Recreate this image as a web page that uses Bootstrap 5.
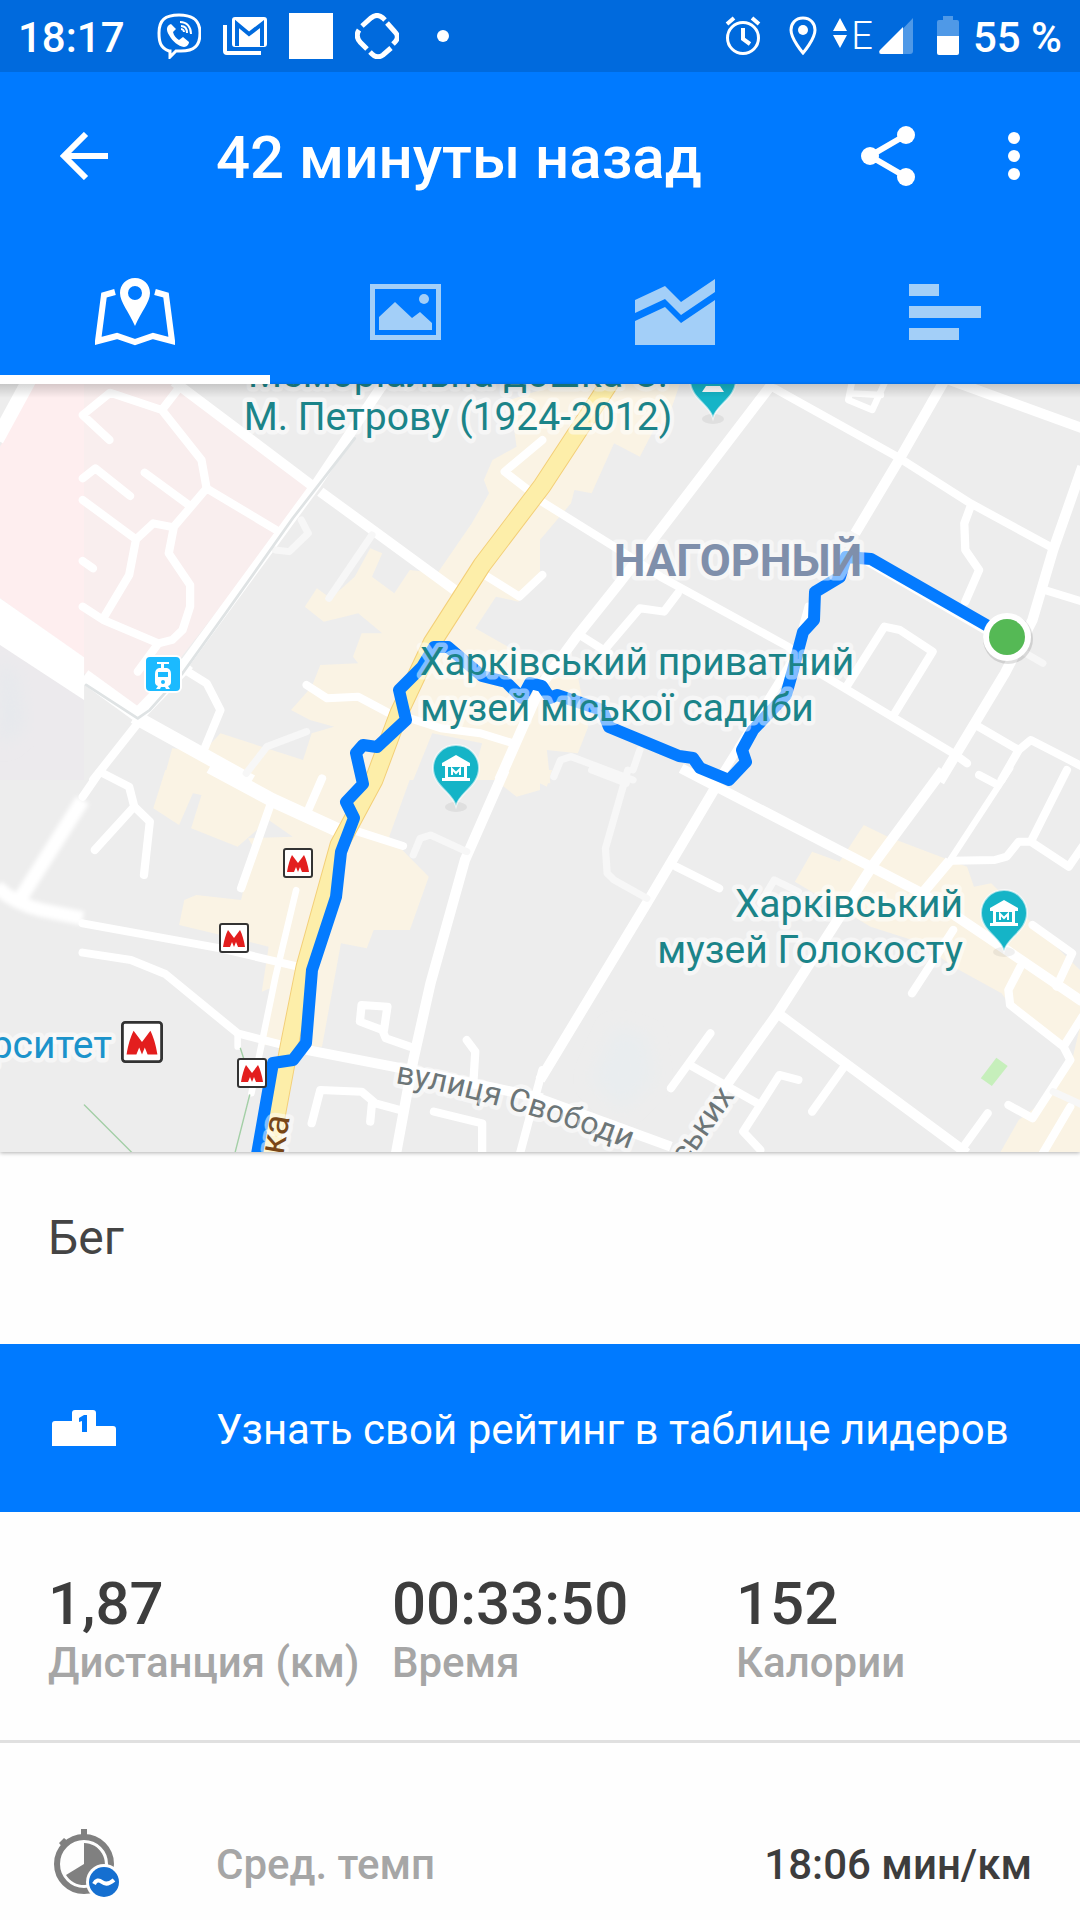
<!DOCTYPE html>
<html lang="ru">
<head>
<meta charset="utf-8">
<meta name="viewport" content="width=device-width, initial-scale=1">
<title>42 минуты назад</title>
<link href="https://cdn.jsdelivr.net/npm/bootstrap@5.3.0/dist/css/bootstrap.min.css" rel="stylesheet">
<script src="https://cdn.jsdelivr.net/npm/bootstrap@5.3.0/dist/js/bootstrap.bundle.min.js"></script>
<style>
  body { font-family: Roboto, "Noto Sans", sans-serif; font-size: 42px; line-height: 54px; color: #3d3d3d; background: #fefefe; overflow-x: hidden; }
  svg { display: block; flex: none; }
  .statusbar { height: 72px; padding: 0 18px; background: #006add; font-weight: 500; }
  .bar-text { padding-top: 4px; }
  .notif { gap: 22px; margin-left: 32px; }
  .net { gap: 6px; margin: 0 24px 0 16px; }
  .pin-icon { margin-left: 20px; }
  .battery-text { margin-left: 14px; }
  .net-type { font-size: 38px; font-weight: 300; }
  .brand-bg { background: #007aff; }
  .appbar { height: 168px; padding: 0 30px 0 48px; }
  .icon-btn { width: 72px; height: 72px; padding: 0; border: 0; background: none; color: #fff; display: flex; align-items: center; justify-content: center; }
  .screen-title { font-size: 60px; line-height: 72px; font-weight: 500; margin: 0 0 0 96px; }
  .actions { gap: 54px; }
  .tabs-row .nav-link { height: 144px; padding: 0; border-bottom: 9px solid transparent; display: flex; align-items: center; justify-content: center; color: #a3cff8; border-radius: 0; }
  .tabs-row .nav-link.active { color: #fff; border-bottom-color: #fff; }
  .tabs-row svg { margin-top: 9px; }
  .map-view { box-shadow: 0 1px 4px rgba(0,0,0,.3); background: #ededed; }
  .map-view svg { width: 100%; height: auto; }
  .activity { font-size: 48px; line-height: 72px; padding: 50px 48px 70px; color: #444; }
  .leader-link { height: 168px; padding: 0 48px; }
  .lead-icon { width: 72px; margin-right: 96px; }
  .stats { padding: 60px 0 50px 48px; border-bottom: 3px solid #e0e0e0; }
  .stat-value { font-size: 60px; line-height: 64px; font-weight: 500; }
  .stat-label { color: #a6a6a6; font-weight: 500; white-space: nowrap; }
  .detail { padding: 86px 48px 19px; font-weight: 500; }
  .detail svg { margin-left: 6px; }

  .road { fill: none; stroke: #fff; stroke-width: 24; stroke-linecap: round; stroke-linejoin: round; }
  .road-l { stroke-width: 30; stroke-linecap: butt; }
  .road-xl { stroke-width: 42; stroke-linecap: butt; }
  .road-s { stroke-width: 19; }
  .lane { stroke: #f7f7f7; stroke-width: 21; }
  .rail { stroke: #dfe3e4; stroke-width: 8; }
  .zone { fill: #faf3e4; }
  .place { font-size: 39px; fill: #1b8489; }
  .street { font-size: 32px; fill: #6d7678; }
  .halo { paint-order: stroke; stroke: #fff; stroke-opacity: .5; stroke-width: 9px; stroke-linejoin: round; }
</style>
</head>
<body>

<div class="statusbar d-flex align-items-center justify-content-between text-white">
  <div class="d-flex align-items-center">
    <span class="bar-text">18:17</span>
    <div class="notif d-flex align-items-center">
      <svg width="44" height="46" viewBox="0 0 44 46" fill="none" stroke="#fff" stroke-width="3"><path d="M12 38C3 35 2 28 2 20 2 7 8 2 22 2S43 7 43 20 37 38 24 38l-5 0-6 6v-6z"/><path d="M14 11c-5 2-5 6-2 11 4 7 9 11 15 12 3 0 5-3 5-5l-6-5-4 3c-3-2-5-4-6-8l3-3z" fill="#fff" stroke="none"/><path d="M23 9c7 0 11 5 11 12M24 13c4 0 6 3 6 7M24 16c2 0 3 2 3 3" stroke-width="2"/></svg>
      <svg width="44" height="46" viewBox="0 0 44 46"><path fill="#fff" d="M12 4h29q3 0 3 3v24q0 3-3 3H12q-3 0-3-3V7q0-3 3-3zM0 12h4v26h34v4H4q-4 0-4-4z"/><path d="M14 33V11l12 10 13-10v22" fill="none" stroke="#006add" stroke-width="4"/></svg>
      <svg width="44" height="46"><path fill="#fff" d="M0 0h44v46H0z"/></svg>
      <svg width="44" height="46" viewBox="0 0 44 46" fill="none" stroke="#fff" stroke-width="5"><path d="M7 13l9-8q6-5 12 0l2 2M32 10l8 9q5 5 0 10l-2 2M36 35l-8 7q-6 4-11-1l-2-2M12 36l-7-7q-5-6-1-12"/></svg>
      <svg width="44" height="46"><circle cx="22" cy="23" r="6" fill="#fff"/></svg>
    </div>
  </div>
  <div class="d-flex align-items-center">
    <svg width="36" height="40" viewBox="0 0 36 40" fill="none" stroke="#fff" stroke-width="3"><circle cx="18" cy="22" r="15.500"/><path d="M18 12v11l7 5M2 8l7-6M34 8l-7-6" stroke-width="4"/></svg>
    <svg class="pin-icon" width="36" height="40" viewBox="0 0 36 40"><path d="M22 2c-8 0-12 6-12 12 0 9 12 23 12 23s12-14 12-23c0-6-4-12-12-12z" fill="none" stroke="#fff" stroke-width="3"/><circle cx="22" cy="14" r="5" fill="#fff"/></svg>
    <div class="net d-flex align-items-center">
      <div class="d-flex align-items-center gap-1"><svg width="14" height="40" viewBox="0 0 14 40" fill="#fff"><path d="M0 15L7 2l7 13zM0 19h14L7 32z"/></svg><span class="net-type">E</span></div>
      <svg width="34" height="36" viewBox="0 0 34 36"><path d="M0 36L34 0v33q0 3-3 3z" fill="#4f99e7"/><path d="M2 36q-3-1-1-4L24 9v27z" fill="#fff"/></svg>
    </div>
    <svg width="22" height="40" viewBox="0 0 22 40"><path d="M6 0h10v4h4q2 0 2 2v16H0V6q0-2 2-2h4z" fill="#4f99e7"/><path d="M0 20h22v17q0 2-2 2H2q-2 0-2-2z" fill="#fff"/></svg>
    <span class="bar-text battery-text">55 %</span>
  </div>
</div>

<header class="brand-bg text-white">
  <div class="appbar d-flex align-items-center">
    <button class="icon-btn" type="button" aria-label="Назад"><svg width="48" height="48" viewBox="0 0 48 48" fill="none" stroke="currentColor" stroke-width="6"><path d="M26 2L4 24l22 22M4 24h44"/></svg></button>
    <h1 class="screen-title bar-text flex-grow-1">42 минуты назад</h1>
    <div class="actions d-flex">
      <button class="icon-btn" type="button" aria-label="Поделиться"><svg width="54" height="60" viewBox="0 0 54 60" fill="currentColor"><path d="M45 9L9 30l36 21" fill="none" stroke="currentColor" stroke-width="6"/><circle cx="45" cy="9" r="9"/><circle cx="9" cy="30" r="9"/><circle cx="45" cy="51" r="9"/></svg></button>
      <button class="icon-btn" type="button" aria-label="Ещё"><svg width="12" height="48" viewBox="0 0 12 48" fill="currentColor"><circle cx="6" cy="6" r="6"/><circle cx="6" cy="24" r="6"/><circle cx="6" cy="42" r="6"/></svg></button>
    </div>
  </div>
  <nav class="tabs-row nav nav-justified">
    <a class="nav-item nav-link active" href="#map" aria-label="Карта"><svg width="80" height="68" viewBox="0 0 80 68"><path d="M20 14L9 17 3 63l19-5 18 6 18-6 19 5-6-46-11-3" fill="none" stroke="currentColor" stroke-width="6"/><path fill="currentColor" fill-rule="evenodd" d="M40 0C31 0 25 7 25 15c0 9 9 19 15 33 6-14 15-24 15-33C55 7 49 0 40 0zm0 8a7 7 0 1 1 0 14 7 7 0 0 1 0-14z"/></svg></a>
    <a class="nav-item nav-link" href="#photos" aria-label="Фото"><svg width="71" height="56" viewBox="0 0 71 56"><path d="M2.500 2.500h66v51h-66z" fill="none" stroke="currentColor" stroke-width="5"/><path d="M9 46V33l16-15 17 16 8-6 12 11v7z" fill="currentColor"/><circle cx="54" cy="15" r="5" fill="currentColor"/></svg></a>
    <a class="nav-item nav-link" href="#charts" aria-label="Графики"><svg width="80" height="66" viewBox="0 0 80 66" fill="currentColor"><path d="M0 21L30 7l16 16L80 0v13L46 36 30 20 0 34zM0 42l30-14 16 16 34-23v45H0z"/></svg></a>
    <a class="nav-item nav-link" href="#splits" aria-label="Отрезки"><svg width="72" height="56" viewBox="0 0 72 56" fill="currentColor"><path d="M0 0h30v12H0zM0 22h72v12H0zM0 44h50v12H0z"/></svg></a>
  </nav>
</header>

<main>
<section class="map-view" id="map">
<svg viewBox="0 384 1080 768" role="img" aria-label="Карта маршрута">
  <defs>
    <filter id="soft" x="-20%" y="-20%" width="140%" height="140%"><feGaussianBlur stdDeviation="6"/></filter>
    <filter id="haze" x="-40%" y="-40%" width="180%" height="180%"><feGaussianBlur stdDeviation="24"/></filter>
    <linearGradient id="topShade" x1="0" y1="0" x2="0" y2="1"><stop offset="0" stop-color="#000" stop-opacity=".16"/><stop offset="1" stop-color="#000" stop-opacity="0"/></linearGradient>
    <g id="museum"><ellipse cx="0" cy="1" rx="11" ry="5" fill="#000" opacity=".06"/><path d="M0 0C-4-14-23-20-23-38a23 23 0 0 1 46 0C23-20 4-14 0 0z" fill="#15b4c7" stroke="#fff" stroke-opacity=".6" stroke-width="2"/></g>
    <g id="house"><path d="M0-51l14 8v3h-28v-3zM-11-41h22v16h-22zM-14-28h28v3h-28z" fill="#fff"/><path d="M-8-39H8v10H-8z" fill="#15b4c7"/><path d="M-4-31v-6l4 4 4-4v6" fill="none" stroke="#fff" stroke-width="2"/></g>
    <g id="metro"><rect x="-14" y="-14" width="28" height="28" rx="2" fill="#fff" stroke="#333" stroke-width="2"/><path d="M-11 9c1-7 3-13 5-17l6 8 6-8c2 4 4 10 5 17H4L2 4 0 9l-2-5-2 5z" fill="#e31e1e"/></g>
  </defs>

  <!-- districts -->
  <g transform="translate(0 380) scale(.3444 .3333)">
    <path fill="#f9eeee" d="M100 0H500L910 320 800 470 410 985 244 880V0z"/>
    <path fill="#feeeef" d="M100 0L0 200V655L244 835V0z"/>
    <path fill="#eceaed" d="M0 790L244 940V1200H0z"/>
    <path fill="#e6e9ed" filter="url(#haze)" d="M0 830l50 60 20 150-70 60z"/>
    <path class="zone" d="M1568 30L1480 60 1500 200 1430 240 1405 300 1420 340 1370 430 1270 580 1190 570 1145 640 1080 590 1110 520 1075 505 1030 590 960 655 920 625 885 680 940 725 1000 710 1040 700 1110 760 1050 760 1025 830 1040 850 930 855 905 920 845 990 900 1020 970 1040 905 1060 880 1140 640 1060 590 1115 500 1105 475 1200H1200L1255 1060 1400 1090 1370 1200H1568V850L1475 800 1380 745 1440 650 1505 665 1568 590z"/>
  </g>
  <g transform="translate(540 380) scale(.3444 .3333)">
    <path class="zone" d="M0 0H410L370 120 330 150 290 230 215 190 150 340 100 330 90 370 0 480zM0 890H110L140 1040 110 1120 20 1110 30 1210H0z"/>
  </g>
  <g transform="translate(0 770) scale(.3444 .3333)">
    <path class="zone" d="M480 0L445 115 520 165 560 70 585 75 555 175 690 230 780 150 850 200 720 205 735 230 700 390 570 375 535 390 520 465 780 530 760 665 795 650 760 825 935 830 990 520 1065 535 1085 480 1190 480 1245 320 1130 200 1200 0zM1400 0l100 80 68-20V0z"/>
  </g>
  <g transform="translate(540 770) scale(.3444 .3333)">
    <path class="zone" d="M0 0h35L20 50 0 40zM940 165L1010 200 1240 290 1260 350 1310 340 1568 600V1150H1335L1390 1050 1480 980 1545 870 1568 770 1520 820 1365 705 1340 670 1200 590 1110 520 960 470 740 335 790 245 870 275z"/>
    <path fill="#c6efbb" d="M1325 863l33 25-46 60-32-23z"/>
    <path fill="#e9edef" filter="url(#haze)" d="M220 770l90 30 20 130-90 90-90-90z"/>
  </g>

  <!-- streets -->
  <g class="road" transform="translate(0 380) scale(.3444 .3333)">
    <path stroke="none" fill="#fff" d="M0 655L244 832V960L0 795z"/>
    <path class="road-xl" d="M90-10L-10 180"/>
    <path d="M240 105L320 38 470 90 585 240 600 325 505 440 490 520 552 615 552 680 530 750 500 780 460 790 300 720 240 680M240 105L318 180M470 90L515 30M240 295L277 265 378 348M420 278L548 375M240 360L395 478 445 430 505 442M395 478L375 585 300 715M600 325L810 455M240 543L270 565M460 790L400 875M545 875L600 910 640 990 590 1115M400 1030L270 1200M1575 180L1465 275 1540 335M1400 580L1508 650 1575 585M890 915L950 955 1040 950 1130 1000M1190 1015L1280 1045 1395 1060 1490 1090"/>
    <path class="road-l" d="M505 5L910 320M930 335L1320 630M1120 0L920 310 530 860M1570 920L1450 1200"/>
    <path class="road-xl" d="M545 850L400 1005 244 888M390 1010L730 1205"/>
    <path class="lane" d="M1080 465L955 655M890 1055L775 1100 715 1180M875 420L895 460 840 515 800 510"/>
    <path class="rail" d="M1030 175L850 415 655 700 530 880 435 990 400 1015 250 915"/>
  </g>
  <g class="road" transform="translate(540 380) scale(.3444 .3333)">
    <path d="M-10 355L215 500 350 590 720 800 820 885 1200 1120 1240 1150M680 25L1045 235 1250 370 1490 505M1250 380L1232 430 1235 510 1275 570 1235 665M1465 630L1575 665M950 545L1300 755M400 640L360 695 290 685 195 800M115 765L200 820M890 920L1000 740 1045 750 1140 815 1030 1000M1265 1035L1390 1110 1425 1080 1575 1160M1390 1110L1340 1200M780 680L740 830 530 1180"/>
    <path class="road-l" d="M675 10L320 490 230 610 110 765 0 920M1175 0L1045 235 915 460M1190 0L1575 145M1575 260L1490 510 1430 720 1350 880 1160 1205"/>
    <path class="road-s" d="M905 10L895 60 965 90 1000 10M905 40L990 45"/>
    <path class="lane" d="M40 1190L60 1140 90 1130 270 1200M290 1110L270 1170M1410 820L1460 850"/>
  </g>
  <g class="road" transform="translate(0 770) scale(.3444 .3333)">
    <path filter="url(#soft)" class="road-xl" d="M240 90L50 400M-10 350Q40 400 120 420L240 445"/>
    <path d="M240 80L290 5 375 50 390 110 435 155 418 315M385 115L275 240M240 460L640 535 865 590M240 548L380 570 480 612 690 790 820 825M935 25L895 120M785 105L700 355M1040 185L1170 228M1190 830L1120 805 1110 780 1045 755 1050 705 1125 710 1115 780M905 1060L930 960 1050 965 1090 1000 1160 1020M1075 1055L1080 1000M1355 810L1380 845 1375 930M1260 1025L1400 1060V1150M1575 900L1510 1150"/>
    <path class="road-l" d="M1465 0L1350 270 1250 640 1200 870 1150 1150M890 840L1190 900 1575 985"/>
    <path class="road-xl" d="M610-10L790 90 980 180"/>
    <path class="road-s" d="M860 360L800 620 730 970M690 790V830"/>
    <path class="lane" d="M1200 255L1220 205 1250 195 1355 245"/>
    <path stroke="#a3cfa6" stroke-width="4" d="M245 1005L390 1155M725 975L682 1150M698 835L712 880"/>
  </g>
  <g class="road" transform="translate(540 770) scale(.3444 .3333)">
    <path d="M395 290L520 355M1230 1130L1300 1030M880 895L790 1025M495 790L380 955M435 885L640 1005 590 1085 640 1140M640 1005L695 915 750 930M1275 15L1330 45M1195 272L1320 270 1355 260 1390 215 1425 215 1530 0M1425 215L1535 290 1575 230M1200 480L1080 670M1430 465L1545 550 1500 650M1395 590L1360 660 1365 705 1520 830 1540 870 1430 1045 1360 1005M1520 830L1575 740M1540 1010L1460 1150"/>
    <path class="road-l" d="M410-5L960 290 1110 370 1340 530 1575 695M1170 0L970 280 690 730 545 940M505 60L310 400 0 930M690 730L1240 1150M1190 272L1110 370M-5 985L380 1130"/>
    <path class="road-s" d="M1365-5L1190 272M545 940L520 1000"/>
    <path class="lane" d="M255 0L190 235 195 310 215 330 310 385M150 0L250 40M750 365L680 330 640 400M1490 965L1575 1005"/>
  </g>

  <!-- avenue -->
  <g fill="none" stroke-linejoin="round">
    <path stroke="#f3cf78" stroke-width="19" d="M618 370L542 486 482 565 432 643 399 713 374 780 339 845 305 967 289 1047 268 1160"/>
    <path stroke="#fdeea9" stroke-width="17" d="M618 370L542 486 482 565 432 643 399 713 374 780 339 845 305 967 289 1047 268 1160"/>
  </g>

  <!-- track -->
  <path fill="none" stroke="#047bff" stroke-width="12" stroke-linejoin="round" d="M1007 637L871 559 846 557 840 577 815 592 814 620 803 632 793 670 786 695 753 730 742 750 746 762 729 780 700 768 693 758 679 756 609 727 602 710 557 695 550 698 542 686 530 683 522 698 506 682 482 676 448 647 434 647 422 667 399 690 406 720 377 747 363 745 356 753 363 784 346 802 354 818 341 852 336 897 312 970 306 1043 293 1060 273 1063 256 1160"/>
  <circle cx="1008" cy="639" r="25" fill="#000" opacity=".12"/>
  <circle cx="1007" cy="637" r="24" fill="#fff"/><circle cx="1007" cy="637" r="18" fill="#55b955"/>

  <!-- transit -->
  <rect x="145" y="656" width="36" height="36" rx="5" fill="#1bbaff" stroke="#fff" stroke-width="2"/>
  <path d="M157 662h12v2h-5v4h3q4 1 4 6v8q0 3-3 4l2 3h-4l-1-2h-4l-1 2h-4l2-3q-3-1-3-4v-8q0-5 4-6h2v-4h-4z" fill="#fff"/><path d="M158 672h10v5h-10z" fill="#1bbaff"/><circle cx="163" cy="682" r="2" fill="#1bbaff"/>
  <use href="#metro" x="298" y="863"/><use href="#metro" x="234" y="938"/><use href="#metro" x="252" y="1073"/>
  <use href="#metro" transform="translate(142 1042) scale(1.400)"/>

  <!-- labels -->
  <g class="place halo">
    <text x="458" y="387" text-anchor="middle">Меморіальна дошка О.</text>
    <text x="458" y="430" text-anchor="middle">М. Петрову (1924-2012)</text>
    <text x="420" y="675">Харківський приватний</text>
    <text x="420" y="721">музей міської садиби</text>
    <text x="963" y="917" text-anchor="end">Харківський</text>
    <text x="963" y="963" text-anchor="end">музей Голокосту</text>
    <text x="112" y="1058" text-anchor="end" fill="#1b93cb">рситет</text>
  </g>
  <text class="halo" x="738" y="576" text-anchor="middle" font-size="45" font-weight="700" fill="#7f8fab">НАГОРНЫЙ</text>
  <path id="svobody" fill="none" d="M395 1083Q510 1102 650 1157"/>
  <text class="street halo"><textPath href="#svobody">вулиця Свободи</textPath></text>
  <text class="street halo" text-anchor="end" transform="translate(735 1096) rotate(-55)">ських</text>
  <text class="halo" font-size="36" fill="#784617" text-anchor="end" transform="translate(290 1117) rotate(-80)">ка</text>

  <use href="#museum" x="713" y="418"/><path d="M706 386h14l4 6h-22z" fill="#fff"/>
  <use href="#museum" x="456" y="806"/><use href="#house" x="456" y="806"/>
  <use href="#museum" x="1004" y="951"/><use href="#house" x="1004" y="951"/>
  <rect x="0" y="384" width="1080" height="14" fill="url(#topShade)"/>
</svg>
</section>

<div class="activity">Бег</div>

<a class="leader-link brand-bg text-white text-decoration-none d-flex align-items-center" href="#leaderboard">
  <span class="lead-icon"><svg width="72" height="36" viewBox="0 0 72 36"><path d="M4 36V14q0-3 3-3h17V3q0-3 3-3h18q3 0 3 3v13h17q3 0 3 3v17z" fill="#fff"/><path d="M39 5v17h-5V11l-3 1V8l5-3z" fill="#007aff"/></svg></span>
  <span class="bar-text">Узнать свой рейтинг в таблице лидеров</span>
</a>

<div class="stats">
  <div class="row g-0">
    <div class="col-4"><div class="stat-value">1,87</div><div class="stat-label">Дистанция (км)</div></div>
    <div class="col-4"><div class="stat-value">00:33:50</div><div class="stat-label">Время</div></div>
    <div class="col-4"><div class="stat-value">152</div><div class="stat-label">Калории</div></div>
  </div>
</div>

<div class="detail d-flex align-items-center">
  <span class="lead-icon"><svg width="68" height="72" viewBox="0 0 68 72"><path d="M27 0h6v7h-6zM5 14l5-5 5 4-6 6z" fill="#808080"/><circle cx="30" cy="35" r="27" fill="none" stroke="#808080" stroke-width="6"/><path d="M30 14a21 21 0 1 1-18 32l18-11z" fill="#808080"/><circle cx="50" cy="53" r="18" fill="#fefefe"/><circle cx="50" cy="53" r="15" fill="#156fd0"/><path d="M40 55q3-6 8-2t12-2" fill="none" stroke="#fff" stroke-width="4"/></svg></span>
  <span class="stat-label flex-grow-1">Сред. темп</span>
  <span>18:06 мин/км</span>
</div>
</main>
</body>
</html>
